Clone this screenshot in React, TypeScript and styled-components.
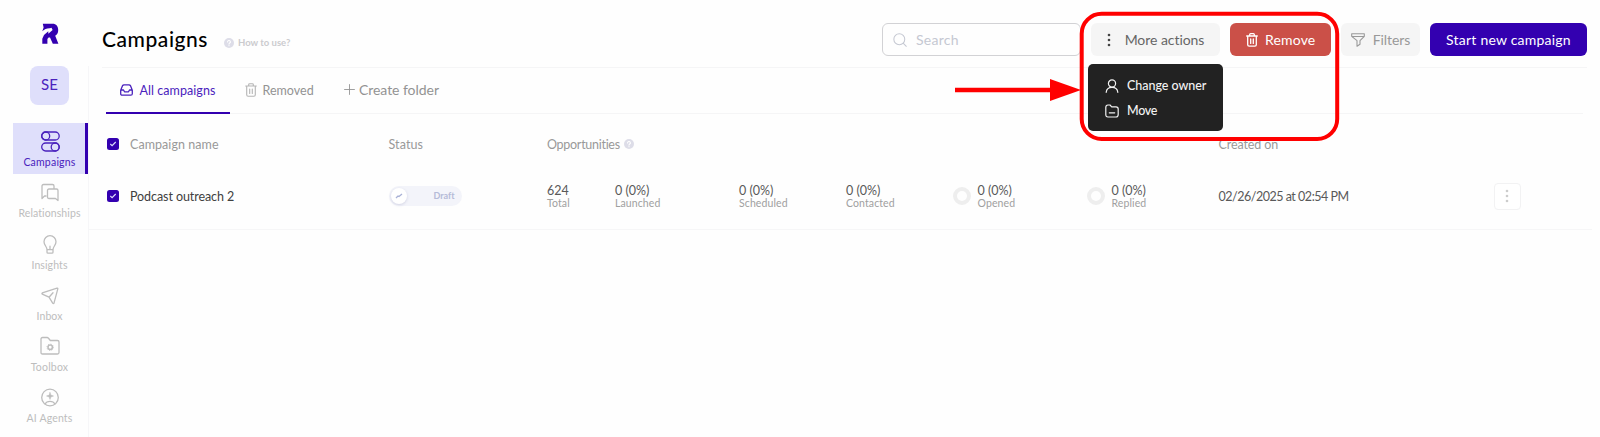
import React from 'react';
import styled, { createGlobalStyle } from 'styled-components';

const Global = createGlobalStyle`
  * { box-sizing: border-box; }
  body { margin: 0; background: #fefefe; font-family: Lato, "Open Sans", sans-serif; font-variant-ligatures: none; color: #3c3c3c; }
  button { font: inherit; border: 0; margin: 0; }
`;

const Page = styled.div`position: relative; display: flex; width: 1600px; height: 437px; overflow: hidden;`;

/* ---------- sidebar ---------- */
const Sidebar = styled.aside`width: 89px; padding-left: 13px; display: flex; flex-direction: column; flex: none;`;
const Logo = styled.div`height: 66px; padding: 23px 0 0 28px; svg { display: block; }`;
const Rail = styled.nav`flex: 1; border-right: 1px solid #f6f6f8;`;
const Avatar = styled.div`
  width: 39px; height: 39px; margin: 0 0 18px 17px; border-radius: 8px; background: #dfdffb; color: #4a22bd;
  display: flex; align-items: center; justify-content: center; font-size: 15px; letter-spacing: .2px; padding-bottom: 3px;
`;
const NavItem = styled.a<{ $active?: boolean }>`
  display: flex; flex-direction: column; align-items: center; height: 51.3px; padding: 8px 2px 0 0;
  color: ${p => (p.$active ? '#4a22bd' : '#bdbdbd')};
  background: ${p => (p.$active ? '#dfdffb' : 'none')};
  box-shadow: ${p => (p.$active ? 'inset -3px 0 #3300b0' : 'none')};
  svg { display: block; margin-bottom: 4px; flex: none; }
`;
const NavText = styled.span<{ $ls: number }>`font-size: 10.5px; line-height: 13px; white-space: nowrap; letter-spacing: ${p => p.$ls}px;`;

/* ---------- header ---------- */
const Main = styled.main`flex: 1; min-width: 0;`;
const Header = styled.header`
  height: 68px; margin: 0 13px; padding: 23px 0 0; border-bottom: 1px solid #f5f5f6; display: flex; align-items: flex-start;
`;
const Title = styled.h1`margin: 0; font-size: 21px; line-height: 32px; font-weight: 500; color: #000; letter-spacing: .55px; width: 122px;`;
const Help = styled.span`display: flex; align-items: center; gap: 4px; height: 33px; padding-top: 6px; font-size: 9.5px; font-weight: 700; color: #cbcbce;`;
const Tools = styled.div`margin-left: auto; display: flex;`;
const Search = styled.div`
  width: 199px; height: 33px; border: 1px solid #d2d2d5; border-radius: 6px; display: flex; align-items: center;
  padding-left: 10px; gap: 9px; font-size: 14px; color: #c5c8d2; margin-right: 10px; letter-spacing: .25px;
`;
const Button = styled.button<{ $bg: string; $fg: string; $w: number; $gap?: number; $ls?: number; $mr?: number }>`
  width: ${p => p.$w}px; height: 33px; border-radius: 6px; background: ${p => p.$bg}; color: ${p => p.$fg};
  display: flex; align-items: center; justify-content: center; gap: ${p => p.$gap ?? 0}px; padding: 0;
  font-size: 14px; letter-spacing: ${p => p.$ls ?? 0}px; margin-right: ${p => p.$mr ?? 0}px; white-space: nowrap;
`;

/* ---------- tabs ---------- */
const Tabs = styled.div`height: 46px; margin: 0 17px; border-bottom: 1px solid #f5f5f6; display: flex;`;
const Tab = styled.a<{ $w: number; $active?: boolean; $size?: number; $gap: number }>`
  width: ${p => p.$w}px; height: 46px; padding-left: 14px; padding-bottom: ${p => (p.$active ? 0 : p.$size ? 3 : 2)}px; display: flex; align-items: center; gap: ${p => p.$gap}px;
  font-size: ${p => p.$size ?? 12.5}px; color: ${p => (p.$active ? '#4a22bd' : '#939393')};
  border-bottom: ${p => (p.$active ? '2px solid #3300b0' : '0')};
  svg { flex: none; }
`;
const TabText = styled.span<{ $ls: number }>`letter-spacing: ${p => p.$ls}px; white-space: nowrap;`;

/* ---------- table ---------- */
const Row = styled.div<{ $head?: boolean }>`
  display: grid; grid-template-columns: 23.5px 258.5px 158.5px 671.5px 275px 1fr; align-items: center;
  height: ${p => (p.$head ? 60 : 55)}px; padding-left: 17.5px; font-size: 12.5px; color: ${p => (p.$head ? '#999' : '#404040')};
`;
const BodyRow = styled(Row)`height: 56px; margin-right: 8px; border-bottom: 1px solid #f6f6f7; padding-bottom: 11px;`;
const Check = styled.span`width: 12px; height: 12px; border-radius: 2.5px; background: #3300b0; display: grid; place-items: center;`;
const Cell = styled.span<{ $ls?: number }>`display: flex; align-items: center; gap: 4px; letter-spacing: ${p => p.$ls ?? 0}px; white-space: nowrap;`;
const DateCell = styled(Cell)`color: #595959; padding-top: 1px;`;
const Toggle = styled.span`
  width: 73px; height: 20px; border-radius: 10px; background: #f3f4fa; display: flex; align-items: center; justify-content: space-between;
  padding: 0 7px 0 2px; font-size: 9px; font-weight: 700; color: #b5bbd8;
`;
const ToggleText = styled.span`padding-bottom: 2px;`;
const Knob = styled.span`width: 16px; height: 16px; border-radius: 50%; background: #fff; box-shadow: 0 1px 3px rgba(80,80,140,.2); display: grid; place-items: center;`;
const Stats = styled.div`display: grid; grid-template-columns: 68px 124px 107px 107px 134px 1fr;`;
const Stat = styled.div`display: flex; align-items: center; gap: 6.5px;`;
const Value = styled.div`font-size: 12.5px; line-height: 13px; color: #595959;`;
const Caption = styled.div`font-size: 10.5px; line-height: 12px; color: #a0a0a0; letter-spacing: .1px;`;
const Ring = styled.span`width: 18px; height: 18px; border: 4.5px solid #eee; border-radius: 50%;`;
const RowMenu = styled.button`width: 27px; height: 27px; border: 1px solid #f2f2f3; border-radius: 4px; background: #fff; display: grid; place-items: center; padding: 0;`;

/* ---------- overlays ---------- */
const Menu = styled.div`
  position: absolute; left: 1088px; top: 64px; width: 134.5px; height: 67px; border-radius: 5px; background: #222;
  padding: 9px 0 0 17px; color: #f2f2f2;
`;
const MenuItem = styled.div<{ $ls: number }>`height: 25px; display: flex; align-items: center; gap: 8px; font-size: 12.5px; font-weight: 500; letter-spacing: ${p => p.$ls}px; white-space: nowrap;`;
const Annotation = styled.svg`position: absolute; left: 950px; top: 0; pointer-events: none;`;

const Icon = ({ w, h, box = '0 0 20 20', sw = 1.3, children }: { w: number; h?: number; box?: string; sw?: number; children: React.ReactNode }) => (
  <svg width={w} height={h ?? w} viewBox={box} fill="none" stroke="currentColor" strokeWidth={sw} strokeLinecap="round" strokeLinejoin="round">{children}</svg>
);
const Question = ({ size }: { size: number }) => (
  <svg width={size} height={size} viewBox="0 0 10 10"><circle cx="5" cy="5" r="5" fill="#dddde8" />
    <path d="M3.6 4a1.4 1.4 0 1 1 2.1 1.1c-.5.3-.7.5-.7 1M5 7.6v.2" fill="none" stroke="#fff" strokeWidth="1.1" strokeLinecap="round" /></svg>
);
const Trash = ({ sw = 1.1 }: { sw?: number }) => (
  <Icon w={12} h={14} box="0 0 12 14" sw={sw}><path d="M.7 3h10.6M3.7 2.8V1.6q0-.9.9-.9h2.8q.9 0 .9.9v1.2M1.7 3.2v8.6q0 1.4 1.4 1.4h5.8q1.4 0 1.4-1.4V3.2M4.7 6v4.4M7.3 6v4.4" /></Icon>
);
const FadedTrash = styled.span`display: flex; margin-left: 1px; color: #b5b5b5;`;
const Dots = ({ color, gap }: { color: string; gap: number }) => (
  <svg width="4" height="16" viewBox="0 0 4 16" fill={color}><circle cx="2" cy={8 - gap} r="1.3" /><circle cx="2" cy="8" r="1.3" /><circle cx="2" cy={8 + gap} r="1.3" /></svg>
);
const Tick = () => <Check><svg width="8" height="8" viewBox="0 0 8 8"><path d="M1.3 4l1.8 1.7L6.7 2" fill="none" stroke="#dfdffb" strokeWidth="1.1" /></svg></Check>;

const nav = [
  { t: 'Campaigns', ls: .2, a: true, i: <Icon w={20} h={21} box="-.7 0 20 21" sw={1.3}><rect x="1" y="1" width="17.5" height="8" rx="4" /><circle cx="5" cy="5" r="4" /><rect x="1" y="12" width="17.5" height="8" rx="4" /><circle cx="14.5" cy="16" r="4" /></Icon> },
  { t: 'Relationships', ls: .1, i: <Icon w={20} h={21} box="0 0 20 21"><path d="M6 13H4.5L2 15.5V3q0-1.5 1.5-1.5h9Q14 1.500 14 3v2.500M9 6h7.500Q18 6 18 7.500V17.500l-2.500-2H9q-1.500 0-1.500-1.500v-6.500Q7.500 6 9 6z" transform="translate(0 1)" /></Icon> },
  { t: 'Insights', ls: .1, i: <Icon w={20} h={21} box="0 0 20 21"><path d="M7 15c0-3-3-4.500-3-8a6 6 0 0 1 12 0c0 3.500-3 5-3 8zM7 15v2.500q0 1 1 1h4q1 0 1-1V15M10 15v-3.500" transform="translate(0 .7)" /></Icon> },
  { t: 'Inbox', ls: .1, i: <Icon w={20} h={21} box="0 0 20 21"><path d="M2.300 7.200L17 2.500q1-.3.800.7L14 17.500q-.6 1-1.300 0L9 11.500 2.300 8.500q-.8-.6 0-1.300zM9 11.500l4-4.500" transform="translate(0 .7)" /></Icon> },
  { t: 'Toolbox', ls: .2, i: <Icon w={20} h={21} box="0 0 20 21"><path d="M1 3q0-1.500 1.500-1.500H7Q8 1.500 8.700 2.500L10.300 4.500H17.500Q19 4.500 19 6v10.500q0 1.500-1.500 1.500h-15Q1 18 1 16.500z" /><circle cx="10.200" cy="11.300" r="2.200" strokeWidth="1.500" /><circle cx="10.200" cy="11.300" r="3.200" strokeWidth="1" strokeDasharray="1 1.510" strokeLinecap="butt" /></Icon> },
  { t: 'AI Agents', ls: .15, i: <Icon w={20} h={21} box="0 -.5 20 21"><circle cx="10" cy="10" r="8.300" /><path d="M5 16.500q1.500-2.700 5-2.700t5 2.700" /><path d="M10 5l.9 2.600 2.600.9-2.600.9L10 12l-.9-2.600-2.600-.9 2.600-.9z" fill="currentColor" strokeWidth=".5" /></Icon> },
];
const stats = [['624', 'Total'], ['0 (0%)', 'Launched'], ['0 (0%)', 'Scheduled'], ['0 (0%)', 'Contacted'], ['0 (0%)', 'Opened'], ['0 (0%)', 'Replied']];

export default function App() {
  return (
    <Page>
      <Global />
      <Sidebar>
        <Logo>
          <svg width="18" height="22" viewBox="0 0 18 22" fill="#3300b0">
            <path d="M1.800.7H11.500C15.300.7 17.200 3.200 17.200 7c0 2.700-1 4.700-3 5.700l3.200 8h-5.600L9 14.500H7.600L6.400 16v4.700H1.300v-5L3 12 7.300 8.300v2.500L11.600 7 10.500 4.700 9 5.200C6 5 3.500 6.200 1.300 8.200L2.600 4.600z" />
          </svg>
        </Logo>
        <Rail>
          <Avatar>SE</Avatar>
          {nav.map(n => <NavItem key={n.t} $active={n.a}>{n.i}<NavText $ls={n.ls}>{n.t}</NavText></NavItem>)}
        </Rail>
      </Sidebar>
      <Main>
        <Header>
          <Title>Campaigns</Title>
          <Help><Question size={10} />How to use?</Help>
          <Tools>
            <Search><Icon w={14} sw={1.5}><circle cx="9" cy="9" r="7.800" /><path d="M14.800 14.800L19 19" /></Icon>Search</Search>
            <Button $bg="#f5f5f5" $fg="#666" $w={129} $gap={14} $mr={10} $ls={-.05}><Dots color="#444" gap={5} />More actions</Button>
            <Button $bg="#cb5048" $fg="#fff" $w={101} $gap={7.5} $mr={10} $ls={.15}><Trash sw={1.3} />Remove</Button>
            <Button $bg="#f5f5f5" $fg="#999" $w={79} $gap={8} $mr={10} $ls={-.1}><Icon w={14} h={14} box="0 0 14 14" sw={1.1}><path d="M.7.7h12.600v2.600L9 7.700v3.500l-3 2V7.700L.7 3.300zM1 3.500h12" /></Icon>Filters</Button>
            <Button $bg="#3300b0" $fg="#fff" $w={157} $ls={.22}>Start new campaign</Button>
          </Tools>
        </Header>
        <Tabs>
          <Tab $w={123.5} $gap={6.5} $active><Icon w={13} h={12} box="0 0 13 12" sw={1.3}><path d="M.7 6.200L2.600 1.600Q3 .8 4 .8h5q1 0 1.400.8l1.900 4.600v3.500q0 1.500-1.500 1.500H2.200Q.7 11.200.7 9.700zM.9 6h2.600l1 1.800h4l1-1.800h2.600" /></Icon><TabText $ls={.06}>All campaigns</TabText></Tab>
          <Tab $w={100.5} $gap={6}><FadedTrash><Trash /></FadedTrash><TabText $ls={.02}>Removed</TabText></Tab>
          <Tab $w={130} $gap={4} $size={14}><Icon w={11} sw={1.6}><path d="M10 1v18M1 10h18" /></Icon><TabText $ls={-.05}>Create folder</TabText></Tab>
        </Tabs>
        <Row $head><Tick /><Cell $ls={.06}>Campaign name</Cell><Cell $ls={.1}>Status</Cell><Cell $ls={-.28}>Opportunities <Question size={10} /></Cell><Cell $ls={-.1}>Created on</Cell></Row>
        <BodyRow>
          <Tick /><Cell $ls={-.08}>Podcast outreach 2</Cell>
          <Toggle><Knob><svg width="8" height="6" viewBox="0 0 8 6"><path d="M1 5l2-2 1 .5L7 1" fill="none" stroke="#a9b1d6" strokeWidth="1.3" /></svg></Knob><ToggleText>Draft</ToggleText></Toggle>
          <Stats>{stats.map(([v, c], i) => <Stat key={c}>{i > 3 && <Ring />}<div><Value>{v}</Value><Caption>{c}</Caption></div></Stat>)}</Stats>
          <DateCell $ls={-.48}>02/26/2025 at 02:54 PM</DateCell>
          <RowMenu><Dots color="#ccc" gap={5} /></RowMenu>
        </BodyRow>
      </Main>
      <Menu>
        <MenuItem $ls={-.04}><Icon w={14} h={14} box="0 0 14 14" sw={1.2}><circle cx="7" cy="4.500" r="3.600" /><path d="M1.200 13.300C1.500 10 3.500 8.300 7 8.300s5.500 1.700 5.800 5" /></Icon>Change owner</MenuItem>
        <MenuItem $ls={-.3}><Icon w={14} h={14} box="0 0 14 14" sw={1.2}><path d="M.8 3.500Q.8 1 3 1h2l1.700 1.800H11q2.200 0 2.200 2.200v5.500Q13.200 13 11 13H3Q.8 13 .8 10.500zM4.300 8.800h5.400" /></Icon>Move</MenuItem>
      </Menu>
      <Annotation width="400" height="145" viewBox="950 0 400 145">
        <path d="M955 90h100" stroke="#f00" strokeWidth="4.500" /><path d="M1050 79l31 11-31 11z" fill="#f00" />
        <rect x="1081.700" y="13.700" width="255.500" height="125.300" rx="20" fill="none" stroke="#f00" strokeWidth="4" />
      </Annotation>
    </Page>
  );
}
